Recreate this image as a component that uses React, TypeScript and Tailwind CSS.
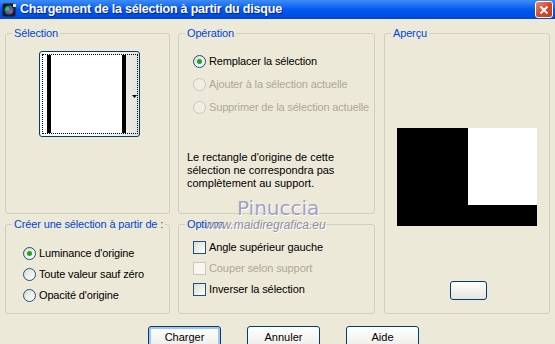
import React from "react";

// Load-selection-from-disk dialog, Windows XP look.

const font = { fontFamily: '"Liberation Sans", Arial, sans-serif' };

function Group({ label, className, children }: { label: string; className?: string; children?: React.ReactNode }) {
  return (
    <div className={`relative rounded-[3px] border border-[#d0d0bf] ${className ?? ""}`}>
      <span className="absolute -top-[7px] left-[6px] whitespace-nowrap bg-[#ece9d8] px-[2px] text-[11px] leading-[13px] tracking-[-0.15px] text-[#0046d5]">
        {label}
      </span>
      {children}
    </div>
  );
}

function Radio({ checked, disabled, label }: { checked?: boolean; disabled?: boolean; label: string }) {
  return (
    <div className="flex h-[13px] items-center gap-[3px] whitespace-nowrap">
      <span
        className={`flex h-[13px] w-[13px] shrink-0 items-center justify-center rounded-full border ${
          disabled ? "border-[#cac8bb] bg-[#f1efe2]" : "border-[#1c5180] bg-gradient-to-br from-[#dcdcd4] to-white"
        }`}
      >
        {checked && <span className="h-[5px] w-[5px] rounded-full bg-[#21a121]" />}
      </span>
      <span className={`text-[11px] leading-[13px] tracking-[-0.15px] ${disabled ? "text-[#aca899]" : "text-black"}`}>{label}</span>
    </div>
  );
}

function Check({ disabled, label }: { disabled?: boolean; label: string }) {
  return (
    <div className="flex h-[13px] items-center gap-[3px] whitespace-nowrap">
      <span
        className={`h-[13px] w-[13px] shrink-0 border ${
          disabled ? "border-[#cac8bb] bg-[#f7f6f1]" : "border-[#1c5180] bg-gradient-to-br from-[#dcdcd4] to-white"
        }`}
      />
      <span className={`text-[11px] leading-[13px] tracking-[-0.1px] ${disabled ? "text-[#aca899]" : "text-black"}`}>{label}</span>
    </div>
  );
}

function Button({ label, focused }: { label: string; focused?: boolean }) {
  return (
    <div
      className={`flex h-[23px] w-[73px] items-center justify-center rounded-[3px] border border-[#003c74] bg-gradient-to-b from-white to-[#ecebe6] text-[11px] text-black ${
        focused ? "shadow-[inset_0_0_0_2px_#a6c3ef]" : ""
      }`}
    >
      {label}
    </div>
  );
}

export default function App() {
  return (
    <div className="h-[344px] w-[555px] overflow-hidden bg-[#ece9d8]" style={font}>
      {/* title bar */}
      <div className="flex h-[19px] items-center bg-gradient-to-b from-[#3d8cf5] via-[#0058ee] to-[#0048d8] pl-[2px] pr-[2px]">
        <svg width="15" height="14" viewBox="0 0 15 14">
          <rect x="0.5" y="0.5" width="13" height="13" rx="2" fill="#1b1b1b" />
          <circle cx="7" cy="7" r="4.5" fill="#2a6e9e" />
          <circle cx="5.5" cy="6" r="2" fill="#3cc24a" />
          <circle cx="8.5" cy="8.5" r="2" fill="#d23aa8" />
          <rect x="11" y="1" width="3" height="3" fill="#e8e8e8" />
        </svg>
        <span
          className="ml-[3px] text-[12.5px] font-bold tracking-[-0.2px] text-white [text-shadow:1px_1px_0_#0a1e8c]"
          style={font}
        >
          Chargement de la sélection à partir du disque
        </span>
        <div className="ml-auto flex h-[17px] w-[18px] items-center justify-center rounded-[3px] border border-white bg-gradient-to-br from-[#e88a6c] via-[#d9482a] to-[#c03a1e]">
          <svg width="10" height="10" viewBox="0 0 10 10">
            <path d="M1.5 1.5 L8.5 8.5 M8.5 1.5 L1.5 8.5" stroke="white" strokeWidth="2" />
          </svg>
        </div>
      </div>

      {/* body */}
      <div className="relative px-[5px] pt-[14px]">
        <div className="grid grid-cols-[165px_197px_167px] grid-rows-[181px_90px] gap-x-[8px] gap-y-[10px]">
          <Group label="Sélection" className="col-start-1 row-start-1">
            <div className="ml-[33px] mt-[17px] flex h-[86px] w-[101px] rounded-[3px] border border-[#003c74] bg-gradient-to-r from-white via-white to-[#e4e3dc] p-[2px]">
              <div className="relative flex flex-1 border border-dotted border-black">
                <div className="ml-[4px] w-[4px] bg-black" />
                <div className="w-[71px] bg-white" />
                <div className="w-[4px] bg-black" />
                <div className="flex flex-1 items-center justify-center">
                  <svg width="5" height="3" viewBox="0 0 5 3" className="ml-[6px] mt-[4px]">
                    <path d="M0 0 H5 L2.5 3 Z" fill="black" />
                  </svg>
                </div>
              </div>
            </div>
          </Group>

          <Group label="Opération" className="col-start-2 row-start-1">
            <div className="ml-[14px] mt-[21px] flex flex-col gap-[10px]">
              <Radio checked label="Remplacer la sélection" />
              <Radio disabled label="Ajouter à la sélection actuelle" />
              <Radio disabled label="Supprimer de la sélection actuelle" />
            </div>
            <p className="ml-[8px] mt-[37px] text-[11px] leading-[13px] text-black">
              Le rectangle d'origine de cette
              <br />
              sélection ne correspondra pas
              <br />
              complètement au support.
            </p>
          </Group>

          <Group label="Aperçu" className="col-start-3 row-span-2 row-start-1 ml-[1px]">
            <div className="flex flex-col items-center">
              <div className="mt-[94px] flex h-[98px] w-[140px] bg-black">
                <div className="ml-auto h-[77px] w-[69px] bg-white" />
              </div>
              <div className="ml-[3px] mt-[55px] h-[19px] w-[37px] rounded-[3px] border border-[#003c74] bg-gradient-to-b from-white to-[#e6e4dc]" />
            </div>
          </Group>

          <Group label="Créer une sélection à partir de :" className="col-start-1 row-start-2">
            <div className="ml-[17px] mt-[22px] flex flex-col gap-[8px]">
              <Radio checked label="Luminance d'origine" />
              <Radio label="Toute valeur sauf zéro" />
              <Radio label="Opacité d'origine" />
            </div>
          </Group>

          <Group label="Options" className="col-start-2 row-start-2">
            <div className="ml-[14px] mt-[16px] flex flex-col gap-[8px]">
              <Check label="Angle supérieur gauche" />
              <Check disabled label="Couper selon support" />
              <Check label="Inverser la sélection" />
            </div>
          </Group>
        </div>

        <div className="mt-[12px] flex gap-[26px] pl-[143px]">
          <Button label="Charger" focused />
          <Button label="Annuler" />
          <Button label="Aide" />
        </div>

        {/* watermark */}
        <div className="pointer-events-none absolute left-[200px] top-[178px] flex flex-col items-start">
          <span
            className="ml-[37px] text-[20px] leading-[22px] tracking-[0px] text-[#a3a1c4] [text-shadow:1px_1px_0_#fff]"
            style={{ fontFamily: '"DejaVu Sans", sans-serif' }}
          >
            Pinuccia
          </span>
          <span className="ml-[5px] text-[12px] italic leading-[12px] text-[#8f8fa0] [text-shadow:1px_1px_0_#fff]">
            www.maidiregrafica.eu
          </span>
        </div>
      </div>
    </div>
  );
}
